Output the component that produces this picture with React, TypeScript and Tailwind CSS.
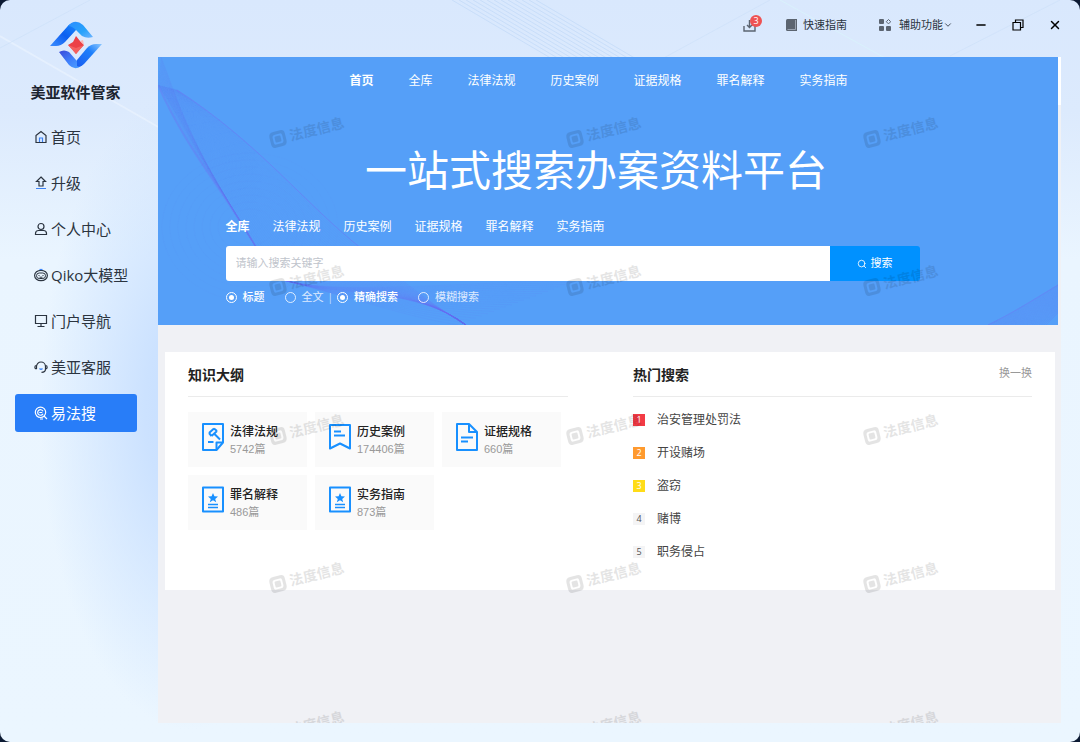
import { useState, type ReactNode } from 'react'
import { ChevronDown, Minus, Search, X } from 'lucide-react'

const navItems = ['首页', '升级', '个人中心', 'Qiko大模型', '门户导航', '美亚客服', '易法搜']

const categories = ['全库', '法律法规', '历史案例', '证据规格', '罪名解释', '实务指南']

const outlines = [
  { title: '法律法规', count: 5742, icon: 'law' },
  { title: '历史案例', count: 174406, icon: 'case' },
  { title: '证据规格', count: 660, icon: 'doc' },
  { title: '罪名解释', count: 486, icon: 'star' },
  { title: '实务指南', count: 873, icon: 'star' },
]

const hotSearches = [
  { text: '治安管理处罚法', badge: 'bg-[#f33b45] text-white' },
  { text: '开设赌场', badge: 'bg-[#ff9a2e] text-white' },
  { text: '盗窃', badge: 'bg-[#ffdc18] text-white' },
  { text: '赌博', badge: 'bg-[#f4f4f5] text-[#555]' },
  { text: '职务侵占', badge: 'bg-[#f4f4f5] text-[#555]' },
]

function Logo() {
  return (
    <svg width="54" height="50" viewBox="0 0 54 50" aria-hidden="true">
      <defs>
        <linearGradient id="logoA" x1="0" y1="1" x2="1" y2="0">
          <stop offset="0" stopColor="#3c8dff" />
          <stop offset="0.5" stopColor="#0d5ff0" />
          <stop offset="1" stopColor="#1b8dff" />
        </linearGradient>
        <linearGradient id="logoB" x1="0" y1="0" x2="1" y2="1">
          <stop offset="0" stopColor="#2a8dff" />
          <stop offset="0.6" stopColor="#27a3fb" />
          <stop offset="1" stopColor="#6fb4ff" />
        </linearGradient>
        <linearGradient id="logoC" x1="0" y1="0" x2="1" y2="1">
          <stop offset="0" stopColor="#3a48d8" />
          <stop offset="0.5" stopColor="#3f80fb" />
          <stop offset="1" stopColor="#4fa6ff" />
        </linearGradient>
        <linearGradient id="logoD" x1="0" y1="1" x2="1" y2="0">
          <stop offset="0" stopColor="#1a5df0" />
          <stop offset="0.6" stopColor="#1d7ffb" />
          <stop offset="1" stopColor="#8cc8ff" />
        </linearGradient>
      </defs>
      <path d="M1 26 L18 7 Q22 2 28 3 L27 10 L16 22 Q12 26 7 26 Z" fill="url(#logoA)" />
      <path d="M19 6 Q26 -2 34 5 L44 17 Q38 19 33 16 L27 10 Q23 6 19 6 Z" fill="url(#logoB)" />
      <path d="M10 32 Q15 29 20 32 L27 40 Q31 44 35 43 L32 46 Q26 51 20 45 Z" fill="url(#logoC)" />
      <path d="M53 24 L35 44 Q31 48 28 46 L28 40 L38 28 Q42 24 47 24 Z" fill="url(#logoD)" />
      <path d="M27 16 L31 21 L35 25 L31 29 L27 34 L23 29 L19 25 L24 22 Z" fill="#ec4147" />
      <path d="M19 25 L27 28 L35 25 L27 34 Z" fill="#f4605f" />
      <path d="M31 21 L34 20 L35 25 Z" fill="#fbb9b8" />
    </svg>
  )
}

function NavIcon({ name }: { name: string }) {
  const shapes: Record<string, ReactNode> = {
    首页: (
      <>
        <path d="M2 5.5 7 1.5l5 4V12.5H2Z" />
        <path d="M5.5 12V8h3v4" stroke="#3b82f6" />
      </>
    ),
    升级: (
      <>
        <path d="M7 1 11.5 5.500H9v4.500H5V5.500H2.5Z" />
        <path d="M2 12.500h10" stroke="#3b82f6" />
      </>
    ),
    个人中心: (
      <>
        <circle cx="7" cy="4.5" r="3" />
        <path d="M1.5 11.5c0-2 1.500-3 3-3h5c1.500 0 3 1 3 3v1h-11Z" />
      </>
    ),
    Qiko大模型: (
      <>
        <ellipse cx="7" cy="7.500" rx="6.400" ry="5.200" />
        <rect x="2.500" y="5" width="9" height="5.500" rx="2.700" strokeWidth="1" />
        <path d="M5 7v1M9 7v1M5.500 9.200h3" strokeWidth="1" />
        <path d="M5.500 1.500h3" stroke="#3b82f6" />
      </>
    ),
    门户导航: (
      <>
        <path d="M1.500 1.500h11v8h-11Z" />
        <path d="M7 9.500v3M3.500 12.500h7" />
      </>
    ),
    美亚客服: (
      <>
        <path d="M2.500 9V6.500a4.500 4.500 0 0 1 9 0V9c0 2-1.500 3.300-4 3.300" />
        <path d="M2.500 5.500C.3 5.500.3 9 2.500 9M11.500 5.500c2.200 0 2.200 3.500 0 3.500" />
        <path d="M5.500 8.500q1.500 1.500 3 0" stroke="#3b82f6" />
      </>
    ),
    易法搜: (
      <>
        <circle cx="6.500" cy="6.300" r="5.200" />
        <path d="M9 5.200A2.800 2.800 0 1 0 9 7.700M5.300 6.500h3" />
        <path d="m10 10 3 3M6 13h3" />
      </>
    ),
  }
  return (
    <svg width="14" height="14" viewBox="0 0 14 14" fill="none" stroke="currentColor" strokeWidth="1.2" aria-hidden="true">
      {shapes[name]}
    </svg>
  )
}

function OutlineIcon({ name }: { name: string }) {
  const star = 'M11 7 12.400 10.300 16 10.500 13.200 12.900 14.200 16.300 11 14.300 7.800 16.300 8.800 12.900 6 10.500 9.600 10.300Z'
  return (
    <svg width="22" height="28" viewBox="0 0 22 28" fill="none" stroke="#1890ff" strokeWidth="2" strokeLinejoin="round" aria-hidden="true">
      {name === 'law' && (
        <>
          <path d="M1 1h20v18.500L14.500 27H1Z" />
          <path d="M14.500 27v-7.500H21" />
          <path d="m7 10 5-4.500M9.500 13 15 8M7 10l2.500 3M12 5.500 15 8M12 10.500l6 6" />
          <path d="M6 19h5.500" />
        </>
      )}
      {name === 'case' && (
        <>
          <path d="M1 2h20v23.500l-10-5-10 5Z" />
          <path d="M5 8.500h7M5 12.500h11" />
        </>
      )}
      {name === 'doc' && (
        <>
          <path d="M1 1h12l8 8v18H1Z" />
          <path d="M13 1v8h8M5 14.500h12M5 18.500h7" />
        </>
      )}
      {name === 'star' && (
        <>
          <path d="M1 1.500h20v24H1Z" />
          <path d={star} fill="#1890ff" stroke="none" />
          <path d="M6 18.500h10M6 21.500h10" strokeWidth="1.500" />
        </>
      )}
    </svg>
  )
}

// faint diagonal beams behind the title bar
function WindowLines() {
  return (
    <svg className="absolute inset-0 h-full w-full" fill="none" aria-hidden="true">
      {Array.from({ length: 13 }, (_, i) => (
        <path key={i} d={`M${452 + i * 7} 0 L${554 + i * 7} 60`} stroke="#bdd6f6" strokeOpacity="0.6" />
      ))}
      <path d="M0 36 L160 128" stroke="#f4faff" strokeWidth="2" strokeOpacity="0.4" />
      <path d="M0 48 L90 0M660 60 L770 0M950 56 L1060 0" stroke="#cbdff8" strokeOpacity="0.6" />
      <path d="M780 0 L885 58" stroke="#d9f1fc" />
    </svg>
  )
}

// each mesh is a fan of strokes blended between two cubic curves
const meshes = [
  { from: [3, 0, 25, 60, 35, 90, 98, 190], to: [0, 28, 30, 95, 60, 125, 98, 190], steps: 10, opacity: 0.14 },
  { from: [0, 28, 47, 100, 85, 185, 130, 230], to: [19, 33, 100, 85, 150, 150, 204, 192], steps: 40, opacity: 0.08 },
  { from: [125, 223, 180, 240, 260, 230, 308, 268], to: [204, 192, 240, 220, 270, 245, 308, 268], steps: 24, opacity: 0.14 },
  { from: [125, 223, 180, 237, 260, 228, 420, 223], to: [125, 223, 190, 240, 250, 260, 300, 268], steps: 20, opacity: 0.08 },
  { from: [830, 268, 855, 256, 880, 240, 900, 228], to: [888, 268, 892, 264, 896, 260, 900, 256], steps: 24, opacity: 0.2 },
]

function BannerMesh() {
  return (
    <svg className="absolute inset-0 h-full w-full" viewBox="0 0 900 268" preserveAspectRatio="none" fill="none" aria-hidden="true">
      {meshes.map((mesh, m) =>
        Array.from({ length: mesh.steps + 1 }, (_, i) => {
          const p = mesh.from.map((v, k) => v + ((mesh.to[k] - v) * i) / mesh.steps)
          return (
            <path
              key={`${m}-${i}`}
              d={`M${p[0]} ${p[1]} C${p[2]} ${p[3]} ${p[4]} ${p[5]} ${p[6]} ${p[7]}`}
              stroke="#6a6cf2"
              strokeOpacity={mesh.opacity}
            />
          )
        }),
      )}
      <path d="M0 28 C30 95 60 125 98 190" stroke="#6a7cf5" strokeWidth="2" strokeOpacity="0.4" />
      <path d="M19 33 C100 85 150 150 204 192" stroke="#6a7cf5" strokeOpacity="0.6" />
      <path d="M830 268 C855 256 880 240 900 228" stroke="#6a7cf5" strokeOpacity="0.5" />
      {Array.from({ length: 9 }, (_, i) => (
        <ellipse key={i} cx="92" cy="170" rx={24 + i * 8} ry={18 + i * 7} stroke="#5f86f5" strokeOpacity="0.06" />
      ))}
    </svg>
  )
}

function Watermarks() {
  return (
    <svg className="pointer-events-none absolute inset-0 h-full w-full" aria-hidden="true">
      {[82, 230, 379, 527, 676].map((y) =>
        [120, 417, 714].map((x) => (
          <g key={`${x}-${y}`} transform={`translate(${x} ${y}) rotate(-14)`} opacity="0.1">
            <path
              d="M-3 -8H4Q8 -8 8 -4V3Q8 8 3 8H-4Q-8 8 -8 4V-3Q-8 -8 -3 -8ZM-2 -5Q-5 -5 -5 -2V3Q-5 5 -3 5H2Q5 5 5 2V-3Q5 -5 3 -5Z"
              fillRule="evenodd"
              fill="#000"
            />
            <rect x="-3" y="-3" width="6" height="6" rx="1" fill="#000" />
            <text x="12" y="5" fontSize="14" fontWeight="700" fill="#000">
              法度信息
            </text>
          </g>
        )),
      )}
    </svg>
  )
}

function Radio({ name, label, defaultChecked }: { name: string; label: string; defaultChecked?: boolean }) {
  return (
    <label className="flex items-center gap-1.5 text-[11px] text-white/80 has-checked:font-medium has-checked:text-white">
      <input
        type="radio"
        name={name}
        defaultChecked={defaultChecked}
        className="h-[11px] w-[11px] appearance-none rounded-full border border-white/80 checked:border-white checked:bg-white checked:bg-clip-content checked:p-0.5"
      />
      {label}
    </label>
  )
}

function Sidebar() {
  const [active, setActive] = useState('易法搜')

  return (
    <aside className="relative w-[158px] shrink-0">
      <div className="flex flex-col items-center pt-5 pr-[7px]">
        <Logo />
        <h1 className="mt-[11px] text-[15px] leading-[22px] font-bold text-[#1c2430]">美亚软件管家</h1>
      </div>
      <nav className="mt-[15px] flex flex-col gap-2 px-[15px]">
        {navItems.map((item) => (
          <button
            key={item}
            type="button"
            onClick={() => setActive(item)}
            className={`flex h-[38px] w-[122px] items-center gap-[3px] rounded-[3px] pl-[19px] text-[15px] whitespace-nowrap ${
              active === item ? 'bg-[#287df8] text-white' : 'text-[#2b3440]'
            }`}
          >
            <NavIcon name={item} />
            {item}
          </button>
        ))}
      </nav>
    </aside>
  )
}

function TitleBar() {
  return (
    <header className="relative flex h-[57px] items-start justify-end pt-[14px] pr-[18px] text-[11px] text-[#2b3440]">
      <div className="flex h-[22px] items-center">
        <button type="button" aria-label="下载" className="relative mr-[30px]">
          <svg width="13" height="13" viewBox="0 0 13 13" fill="none" stroke="#5b6470" strokeWidth="1.4" aria-hidden="true">
            <path d="M1 7v5h11V7M6.500 1v7.500M4 6l2.500 2.500L9 6" />
          </svg>
          <span className="absolute -top-1 left-[7px] flex h-3 w-3 items-center justify-center rounded-full bg-[#ee5253] text-[9px] text-white">
            3
          </span>
        </button>
        <button type="button" className="mr-8 flex items-center gap-1.5">
          <svg width="11" height="12" viewBox="0 0 11 12" aria-hidden="true">
            <path d="M1.500 0H11v12H1.500Q0 12 0 10.500v-9Q0 0 1.500 0Z" fill="#5b6470" />
            <path d="M1.500 10.500H9.500V1" fill="none" stroke="#aab4c2" strokeWidth="0.800" />
          </svg>
          快速指南
        </button>
        <button type="button" className="mr-[21px] flex items-center">
          <svg width="12" height="12" viewBox="0 0 12 12" fill="#5b6470" aria-hidden="true">
            <rect width="5" height="5" rx="1" />
            <rect y="7" width="5" height="5" rx="1" />
            <rect x="7" y="7" width="5" height="5" rx="1" />
            <path d="m9.500.5 2.200 2.200-2.200 2.200-2.200-2.200Z" fill="none" stroke="#5b6470" />
          </svg>
          <span className="ml-2">辅助功能</span>
          <ChevronDown size={10} />
        </button>
        <button type="button" aria-label="最小化" className="mr-6 text-black">
          <Minus size={14} strokeWidth={2.5} />
        </button>
        <button type="button" aria-label="还原" className="mr-6 text-black">
          <svg width="12" height="12" viewBox="0 0 12 12" fill="none" stroke="currentColor" strokeWidth="1.200" aria-hidden="true">
            <path d="M1 3.500h7.500V11H1Z" />
            <path d="M3.500 3.500V1H11v7.500H8.500" />
          </svg>
        </button>
        <button type="button" aria-label="关闭" className="text-black">
          <X size={14} strokeWidth={2.5} />
        </button>
      </div>
    </header>
  )
}

function Banner() {
  const [tab, setTab] = useState('全库')

  return (
    <section className="relative mr-[3px] bg-[#559ff8] pb-5 text-white">
      <BannerMesh />
      <div className="relative pt-3">
        <nav className="flex justify-center gap-[35px] pr-[19px] text-xs leading-6">
          {['首页', ...categories].map((item, i) => (
            <a key={item} href="#" className={i === 0 ? 'font-bold' : ''}>
              {item}
            </a>
          ))}
        </nav>
        <h2 className="mt-[49px] pr-6 text-center text-[42px] leading-[56px]">一站式搜索办案资料平台</h2>
        <form className="mx-auto max-w-[765px] pr-[71px]" onSubmit={(e) => e.preventDefault()}>
          <div className="mt-[17px] flex gap-[23px] text-xs leading-6">
            {categories.map((item) => (
              <button key={item} type="button" onClick={() => setTab(item)} className={tab === item ? 'font-bold' : ''}>
                {item}
              </button>
            ))}
          </div>
          <div className="mt-[7px] flex h-[35px]">
            <input
              type="text"
              aria-label="搜索关键字"
              placeholder="请输入搜索关键字"
              className="min-w-0 flex-1 rounded-l-[3px] bg-white px-2.5 text-[11px] text-[#333] outline-none placeholder:text-[#c0c4cc]"
            />
            <button
              type="submit"
              className="flex w-[90px] items-center justify-center gap-1 rounded-r-[3px] bg-[#0091ff] text-[11px]"
            >
              <Search size={10} />
              搜索
            </button>
          </div>
          <div className="mt-2 flex h-4 items-center">
            <Radio name="scope" label="标题" defaultChecked />
            <span className="w-5" />
            <Radio name="scope" label="全文" />
            <span className="mx-1 text-[10px] text-white/70">|</span>
            <Radio name="mode" label="精确搜索" defaultChecked />
            <span className="w-5" />
            <Radio name="mode" label="模糊搜索" />
          </div>
        </form>
      </div>
    </section>
  )
}

function KnowledgePanel() {
  return (
    <section>
      <h3 className="border-b border-[#ebebeb] pb-[7px] text-sm leading-7 font-bold text-[#222]">知识大纲</h3>
      <ul className="mt-[15px] mr-[7px] grid grid-cols-3 gap-2">
        {outlines.map((item) => (
          <li key={item.title}>
            <a href="#" className="flex h-[55px] items-start gap-1.5 bg-[#fafafa] pt-[11px] pl-[14px]">
              <OutlineIcon name={item.icon} />
              <span>
                <span className="block text-xs leading-[18px] font-medium text-[#222]">{item.title}</span>
                <span className="block font-['Liberation_Sans','Noto_Sans_CJK_SC',sans-serif] text-[11px] leading-[17px] text-[#999]">
                  {item.count}篇
                </span>
              </span>
            </a>
          </li>
        ))}
      </ul>
    </section>
  )
}

function HotPanel() {
  return (
    <section>
      <div className="flex justify-between border-b border-[#ebebeb] pb-[7px]">
        <h3 className="text-sm leading-7 font-bold text-[#222]">热门搜索</h3>
        <button type="button" className="h-6 text-[11px] text-[#999]">
          换一换
        </button>
      </div>
      <ol className="mt-1.5">
        {hotSearches.map((item, i) => (
          <li key={item.text} className="flex h-[33px] items-center gap-3 text-xs">
            <span className={`flex h-3 w-3 items-center justify-center text-[9px] ${item.badge}`}>{i + 1}</span>
            <a href="#" className="text-[#444]">
              {item.text}
            </a>
          </li>
        ))}
      </ol>
    </section>
  )
}

export default function App() {
  return (
    <div className="bg-[#0c1a33] font-['Open_Sans','Noto_Sans_CJK_SC',sans-serif]">
      <div className="relative flex min-h-screen overflow-hidden rounded-[10px] bg-[radial-gradient(ellipse_150px_320px_at_190px_410px,#c6deff_0%,#cce2ff_30%,transparent_100%),linear-gradient(to_bottom,#d9e8fd_0%,#dceafd_15%,#eaf5ff_35%,#ebf6ff_100%)]">
        <WindowLines />
        <Sidebar />
        <div className="relative flex min-w-0 flex-1 flex-col">
          <TitleBar />
          <main className="relative mr-[19px] mb-[19px] flex-1 overflow-hidden bg-[#f0f1f5]">
            <div className="absolute top-0 right-0 h-12 w-[3px] bg-white" />
            <Banner />
            <div className="mt-[27px] mr-[6px] ml-[7px] grid grid-cols-[380fr_399fr] gap-[65px] bg-white px-[23px] pt-[9px] pb-[22px]">
              <KnowledgePanel />
              <HotPanel />
            </div>
            <Watermarks />
          </main>
        </div>
      </div>
    </div>
  )
}
